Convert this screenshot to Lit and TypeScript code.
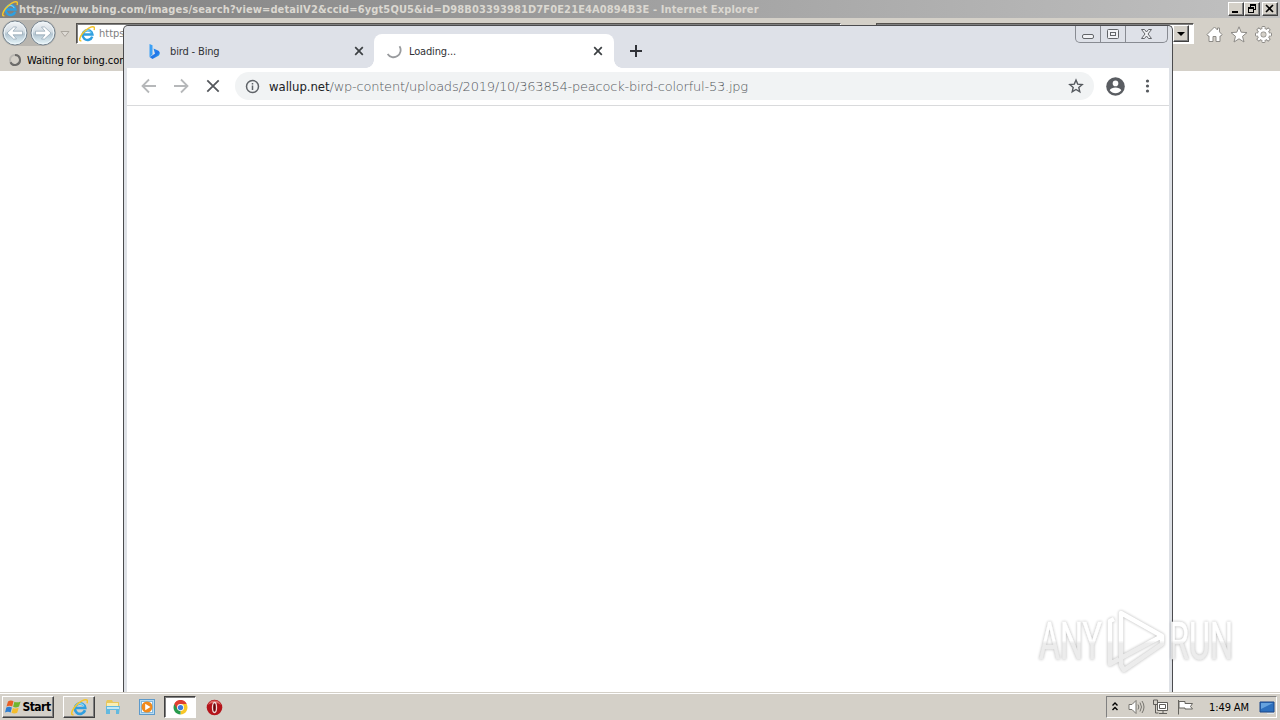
import { LitElement, html, css, svg } from "lit";
import { customElement, property } from "lit/decorators.js";

const ieLogo = (size: number) => html`
  <svg width=${size} height=${size} viewBox="0 0 16 16" fill="none">
    <path d="M13.200 10.600A4.900 4.900 0 1 1 13.400 8.500H4.500" stroke="#2f9fe0" stroke-width="2.500" />
    <path d="M4.300 7.100a4.300 4.300 0 0 1 8 0" stroke="#8ad8f8" stroke-width="1" />
    <path
      d="M2.400 14.600C-.3 15.700.2 11.800 3.500 7.500 7 3 13-.4 15 1.100c.7.6.5 1.800 0 2.900"
      stroke="#f4c52c"
      stroke-width="1.500"
    />
  </svg>
`;

@customElement("round-arrow")
export class RoundArrow extends LitElement {
  @property({ type: Boolean }) forward = false;

  static styles = css`
    :host {
      display: block;
      width: 26px;
      height: 26px;
    }
    svg {
      display: block;
    }
  `;

  render() {
    return html`
      <svg width="26" height="26" viewBox="0 0 26 26">
        <defs>
          <linearGradient id="glass" x2="0" y2="1">
            <stop offset="0" stop-color="#f4f6f8" />
            <stop offset=".45" stop-color="#d3dce3" />
            <stop offset=".55" stop-color="#b3c5d1" />
            <stop offset="1" stop-color="#e9f8fc" />
          </linearGradient>
        </defs>
        <circle cx="13" cy="13" r="12" fill="url(#glass)" stroke="#77848f" />
        <circle cx="13" cy="13" r="10.800" fill="none" stroke="#eef6fa" />
        <path
          transform=${this.forward ? "translate(26 0) scale(-1 1)" : ""}
          d="M5 13l6.500-6h3l-3.500 4.200h9.500v3.600h-9.500l3.500 4.200h-3z"
          fill="#fff"
          stroke="#8fa3b1"
          stroke-width=".7"
        />
      </svg>
    `;
  }
}

@customElement("ie-window")
export class IeWindow extends LitElement {
  static styles = css`
    :host {
      display: flex;
      flex-direction: column;
      height: 692px;
      background: #fff;
      font-family: "DejaVu Sans Condensed", "DejaVu Sans", sans-serif;
    }
    svg {
      display: block;
      flex: none;
    }
    .title {
      display: flex;
      align-items: center;
      height: 18px;
      padding: 0 2px 0 2px;
      background: linear-gradient(90deg, #7f7f7f, #c1c1c1);
      color: #dbd8d1;
      font: bold 11px "DejaVu Sans Condensed", "DejaVu Sans", sans-serif;
      letter-spacing: 0.12px;
      white-space: nowrap;
    }
    .title-text {
      flex: 1;
      padding-left: 1px;
    }
    .buttons {
      display: flex;
    }
    .button {
      box-sizing: border-box;
      width: 16px;
      height: 14px;
      background: #d4d0c8;
      border: 1px solid;
      border-color: #fff #404040 #404040 #fff;
      box-shadow: inset -1px -1px #808080;
    }
    .buttons .button:last-child {
      margin-left: 2px;
    }
    .button.tall {
      height: 17px;
    }
    .nav {
      display: flex;
      height: 30px;
      background: #d4d0c8;
    }
    .arrows {
      display: flex;
      gap: 2px;
      height: 26px;
      margin: 2px 0 0 2px;
      border-radius: 13px;
      background: #b9b6b0;
    }
    .drop {
      margin: 13px 0 0 4px;
    }
    .address {
      display: flex;
      align-items: center;
      box-sizing: border-box;
      width: 765px;
      height: 21px;
      margin: 5px 0 0 6px;
      padding-left: 2px;
      gap: 4px;
      border: 1px solid;
      border-color: #55524e #fff #fff #55524e;
      box-shadow: inset 1px 1px #808080;
      background: #fff;
      color: #808080;
      font-size: 11px;
    }
    .search {
      display: flex;
      justify-content: flex-end;
      box-sizing: border-box;
      width: 318px;
      height: 21px;
      margin: 5px 0 0 35px;
      border: 1px solid;
      border-color: #55524e #fff #fff #55524e;
      box-shadow: inset 1px 1px #808080;
      background: #fff;
      padding: 1px 4px 1px 0;
    }
    .tools {
      display: flex;
      gap: 7px;
      margin: 8px 0 0 12px;
    }
    .tabs {
      display: flex;
      align-items: center;
      gap: 5px;
      height: 22px;
      padding: 1px 0 0 8px;
      background: #d4d0c8;
    }
    .tab-text {
      padding-top: 1px;
      font-size: 11px;
      color: #000;
      letter-spacing: -0.05px;
    }
  `;

  render() {
    return html`
      <div class="title">
        ${ieLogo(16)}
        <span class="title-text"
          >https://www.bing.com/images/search?view=detailV2&amp;ccid=6ygt5QU5&amp;id=D98B03393981D7F0E21E4A0894B3E
          - Internet Explorer</span
        >
        <div class="buttons">
          <div class="button">
            <svg width="14" height="12"><path d="M3 8h6v2H3z" /></svg>
          </div>
          <div class="button">
            <svg width="14" height="12" fill="none" stroke="#000" shape-rendering="crispEdges">
              <path d="M5 1.500h6M5.500 2v2M10.500 2v4.500H9M5 2.500h6M3 4.500h6M3 5.500h6M3.500 5v4.500h5V5" />
            </svg>
          </div>
          <div class="button">
            <svg width="14" height="12"><path d="M3 2l7 7M10 2L3 9" stroke="#000" stroke-width="1.600" /></svg>
          </div>
        </div>
      </div>
      <div class="nav">
        <div class="arrows">
          <round-arrow></round-arrow>
          <round-arrow forward></round-arrow>
        </div>
        <svg class="drop" width="10" height="7">
          <path d="M1 .5h8L5 5.500z" fill="#dedbd5" stroke="#aaa69e" />
        </svg>
        <div class="address">${ieLogo(16)}<span>https://www.bing.com/images/search</span></div>
        <div class="search">
          <div class="button tall">
            <svg width="14" height="15"><path d="M3 6h8L7 10z" /></svg>
          </div>
        </div>
        <div class="tools">
          <svg width="17" height="17" fill="#fff" stroke="#8d8b87">
            <path d="M8.500 1L1 8.500l1 1.500h1v5.500h4v-5h3v5h4V10h1l1-1.500-2.500-2.600V2h-2v2z" />
          </svg>
          <svg width="18" height="17" fill="#fff" stroke="#8d8b87">
            <path d="M9 .8l2.200 5.400 5.800.4-4.500 3.700 1.500 5.700L9 12.800 4 16l1.500-5.700L1 6.600l5.800-.4z" />
          </svg>
          <svg width="17" height="17" viewBox="-8.500 -8.500 17 17" stroke="#8d8b87">
            ${[0, 45, 90, 135, 180, 225, 270, 315].map(
              (angle) =>
                svg`<path transform="rotate(${angle})" d="M-1.700-5l.4-3h2.600l.4 3" fill="#fff" />`,
            )}
            <circle r="4.300" fill="none" stroke-width="3.900" />
            <circle r="4.300" fill="none" stroke="#fff" stroke-width="2.700" />
            ${[0, 45, 90, 135, 180, 225, 270, 315].map(
              (angle) =>
                svg`<path transform="rotate(${angle})" d="M0-4v-3.500" stroke="#fff" stroke-width="2" />`,
            )}
          </svg>
        </div>
      </div>
      <div class="tabs">
        <svg width="14" height="14" fill="none" stroke-width="2">
          <circle cx="7" cy="7" r="5" stroke="#b9b7b2" />
          <path d="M7 2a5 5 0 1 1-4.500 7.200" stroke="#6c6b69" />
        </svg>
        <span class="tab-text">Waiting for bing.com</span>
      </div>
    `;
  }
}

@customElement("chrome-window")
export class ChromeWindow extends LitElement {
  static styles = css`
    :host {
      position: absolute;
      left: 123px;
      top: 25px;
      box-sizing: border-box;
      width: 1050px;
      height: 667px;
      border: 1px solid #4b4b4e;
      border-bottom: 0;
      border-radius: 5px 5px 0 0;
      background: #dee1e6;
      padding: 0 3px;
      overflow: hidden;
      color: #303236;
      font-family: "DejaVu Sans Condensed", "DejaVu Sans", sans-serif;
      white-space: nowrap;
    }
    svg {
      display: block;
      flex: none;
    }
    .strip {
      display: flex;
      align-items: flex-end;
      height: 42px;
      background: #dee1e8;
    }
    .tab {
      display: flex;
      align-items: center;
      box-sizing: border-box;
      height: 34px;
      font-size: 11px;
      letter-spacing: -0.15px;
    }
    .tab.idle {
      width: 247px;
      padding: 0 10px 0 19px;
    }
    .tab.current {
      position: relative;
      width: 240px;
      padding: 0 11px 0 12px;
      border-radius: 8px 8px 0 0;
      background: #fff;
    }
    .tab.current::before,
    .tab.current::after {
      content: "";
      position: absolute;
      bottom: 0;
      left: -8px;
      width: 8px;
      height: 8px;
      background: radial-gradient(circle at 0 0, transparent 7.5px, #fff 8px);
    }
    .tab.current::after {
      left: 100%;
      background: radial-gradient(circle at 100% 0, transparent 7.5px, #fff 8px);
    }
    .label {
      flex: 1;
      padding-left: 7px;
    }
    .plus {
      margin: 0 0 11px 16px;
    }
    .controls {
      align-self: flex-start;
      display: flex;
      box-sizing: border-box;
      width: 93px;
      height: 17px;
      margin: 0 1px 0 auto;
      border: 1px solid #888b92;
      border-top: 0;
      border-radius: 0 0 5px 5px;
    }
    .controls svg + svg {
      border-left: 1px solid #888b92;
    }
    .toolbar {
      display: flex;
      align-items: center;
      box-sizing: border-box;
      height: 38px;
      padding: 0 14px 1px 13px;
      background: #fff;
      border-bottom: 1px solid #d9dadc;
    }
    .toolbar > .nav-icon {
      margin-right: 14px;
    }
    .omnibox {
      display: flex;
      align-items: center;
      box-sizing: border-box;
      flex: 1;
      height: 28px;
      margin: 0 12px 0 -1px;
      padding: 0 10px;
      border-radius: 14px;
      background: #f1f3f4;
      font-size: 13px;
    }
    .url {
      flex: 1;
      padding-left: 9px;
      color: #54585c;
      font-family: "DejaVu Sans Light", "DejaVu Sans Condensed", sans-serif;
      letter-spacing: -0.22px;
    }
    .host {
      color: #202124;
      font-family: "DejaVu Sans Condensed", sans-serif;
      letter-spacing: -0.05px;
    }
    .menu {
      margin-left: 14px;
    }
    .page {
      height: 600px;
      background: #fff;
    }
  `;

  render() {
    const close = html`<svg width="10" height="10" stroke="#3c4043" stroke-width="1.700">
      <path d="M1.200 1.200l7.600 7.600M8.800 1.200L1.200 8.800" />
    </svg>`;
    return html`
      <div class="strip">
        <div class="tab idle">
          <svg width="17" height="17">
            <defs>
              <linearGradient id="bing" x2="1" y2="1">
                <stop offset="0" stop-color="#2b9cf0" />
                <stop offset=".6" stop-color="#2273e8" />
                <stop offset="1" stop-color="#35c9ef" />
              </linearGradient>
            </defs>
            <path d="M3.500 1l3 1.200v9.300L3.500 14z" fill="#3ba0f5" />
            <path d="M7.500 5.500l4.500 2c2.400 1.300 2.200 3.800.5 5.200L6.500 16l-3-2 5.500-3.200z" fill="url(#bing)" />
          </svg>
          <span class="label">bird - Bing</span>
          ${close}
        </div>
        <div class="tab current">
          <svg width="16" height="16" fill="none">
            <path d="M13.500 3.300A7 7 0 1 1 1.600 11" stroke="#999b9e" stroke-width="1.800" />
          </svg>
          <span class="label">Loading...</span>
          ${close}
        </div>
        <svg class="plus" width="12" height="12" stroke="#303238" stroke-width="2">
          <path d="M6 0v12M0 6h12" />
        </svg>
        <div class="controls">
          <svg width="24" height="16" fill="#f1f2f5" stroke="#626569">
            <rect x="6.500" y="8.500" width="11" height="4" rx="1.500" />
          </svg>
          <svg width="24" height="16" fill="#f1f2f5" stroke="#626569">
            <rect x="6.500" y="3.500" width="11" height="9" rx="1" />
            <rect x="9.500" y="6.500" width="5" height="3" />
          </svg>
          <svg width="41" height="16" fill="#f1f2f5" stroke="#626569">
            <path d="M15.500 3.500h3l2 2.500 2-2.500h3l-3.500 4.500 3.500 4.500h-3l-2-2.500-2 2.500h-3l3.500-4.500z" />
          </svg>
        </div>
      </div>
      <div class="toolbar">
        <svg class="nav-icon" width="18" height="16" fill="none" stroke="#b6b8ba" stroke-width="1.800">
          <path d="M16 8H3M9 1.500L2.500 8 9 14.500" />
        </svg>
        <svg class="nav-icon" width="18" height="16" fill="none" stroke="#b6b8ba" stroke-width="1.800">
          <path d="M2 8h13M9 1.500L15.500 8 9 14.500" />
        </svg>
        <svg class="nav-icon" width="18" height="16" stroke="#55585d" stroke-width="1.800">
          <path d="M3.300 2.300l11.400 11.400M14.700 2.300L3.300 13.700" />
        </svg>
        <div class="omnibox">
          <svg width="15" height="15" fill="none" stroke="#5f6368" stroke-width="1.500">
            <circle cx="7.500" cy="7.500" r="6" />
            <path d="M7.500 6.500V11M7.500 4v1.500" />
          </svg>
          <span class="url"
            ><span class="host">wallup.net</span>/wp-content/uploads/2019/10/363854-peacock-bird-colorful-53.jpg</span
          >
          <svg width="16" height="16" fill="none" stroke="#55595e" stroke-width="1.400">
            <path d="M8 2l1.700 4.100 4.500.4-3.400 2.900 1 4.400L8 11.500l-3.800 2.300 1-4.400-3.400-2.900 4.500-.4z" />
          </svg>
        </div>
        <svg width="19" height="19">
          <circle cx="9.500" cy="9.500" r="9.300" fill="#5a5d62" />
          <circle cx="9.500" cy="6.400" r="2.800" fill="#fff" />
          <path d="M3.700 13.200c1.800-3.600 9.800-3.600 11.600 0-2.800 3.900-8.800 3.900-11.600 0z" fill="#fff" />
        </svg>
        <svg class="menu" width="16" height="16" fill="#55595e">
          <circle cx="8.500" cy="3" r="1.600" />
          <circle cx="8.500" cy="8" r="1.600" />
          <circle cx="8.500" cy="13" r="1.600" />
        </svg>
      </div>
      <div class="page"></div>
    `;
  }
}

@customElement("task-bar")
export class TaskBar extends LitElement {
  static styles = css`
    :host {
      display: flex;
      align-items: center;
      box-sizing: border-box;
      height: 28px;
      padding: 1px 3px 0 2px;
      border-top: 1px solid #d4d0c8;
      box-shadow: inset 0 1px #fff;
      background: #d4d0c8;
      font: 11px "DejaVu Sans Condensed", "DejaVu Sans", sans-serif;
      color: #000;
    }
    svg {
      display: block;
      flex: none;
    }
    .raised {
      display: flex;
      align-items: center;
      justify-content: center;
      box-sizing: border-box;
      height: 22px;
      border: 1px solid;
      border-color: #fff #404040 #404040 #fff;
      box-shadow: inset -1px -1px #808080;
    }
    .start {
      width: 52px;
      font-size: 12px;
      font-weight: bold;
      letter-spacing: -0.5px;
      gap: 0;
      margin-right: 9px;
    }
    .app {
      width: 32px;
      margin-right: 1px;
    }
    .pressed {
      display: flex;
      align-items: center;
      justify-content: center;
      box-sizing: border-box;
      width: 32px;
      height: 22px;
      border: 1px solid;
      border-color: #404040 #fff #fff #404040;
      box-shadow: inset 1px 1px #808080;
      background: #fff;
    }
    .quick {
      width: 34px;
      display: flex;
      justify-content: center;
    }
    .pressed + .quick {
      width: 36px;
    }
    .tray {
      display: flex;
      align-items: center;
      box-sizing: border-box;
      width: 171px;
      height: 22px;
      margin-left: auto;
      padding-left: 5px;
      border: 1px solid;
      border-color: #808080 #fff #fff #808080;
    }
    .tray svg {
      margin-right: 8px;
    }
    .clock {
      width: 44px;
      margin: 0 6px 0 7px;
      white-space: nowrap;
      letter-spacing: -0.1px;
    }
    .tray .desktop {
      margin: 0;
    }
  `;

  render() {
    return html`
      <div class="raised start">
        <svg width="17" height="16">
          <path d="M3 2.500C5 1 7 1.300 8.500 2.300L7.200 7.500C5.500 6.500 3.800 6.400 1.500 7.500z" fill="#e85f25" />
          <path d="M9.400 2.700c2 1 4 .8 6.200-.3L14 7.500c-2 1.100-4 1.200-5.900.3z" fill="#6fb52e" />
          <path d="M1.300 8.400c2-1 3.800-.9 5.600.1l-1.300 5C4 12.500 2 12.500 0 13.500z" fill="#2e7ed2" />
          <path d="M7.900 8.900c2 .9 3.900.7 5.800-.2l-1.500 5c-2 1.100-3.900 1-5.700 0z" fill="#f4bd2d" />
        </svg>
        <span>Start</span>
      </div>
      <div class="raised app">${ieLogo(17)}</div>
      <div class="quick">
        <svg width="18" height="18">
          <path d="M2 4l1-2h5l1 2h6v8H2z" fill="#e8c75c" />
          <path d="M3 5h11v4H3z" fill="#f9eeb4" />
          <path d="M2 8h14l-1 8h-3v-4H6v4H2z" fill="#63b9df" />
          <path d="M3 9h12v2H3z" fill="#c3e8f4" />
        </svg>
      </div>
      <div class="quick">
        <svg width="17" height="17">
          <rect x=".5" y=".5" width="15" height="15" fill="#b9dcf2" stroke="#5d9acb" />
          <rect x="2.500" y="2.500" width="11" height="11" fill="#fff" stroke="#82b8dd" />
          <circle cx="8" cy="8" r="5.500" fill="#f18a1c" />
          <path d="M6.200 4.800v6.400L11.500 8z" fill="#fff" />
        </svg>
      </div>
      <div class="pressed">
        <svg width="15" height="15" viewBox="-8 -8 16 16">
          <path d="M0 0L-6.500-3.700A7.500 7.500 0 0 1 6.500-3.700z" fill="#df3f31" />
          <path d="M0 0L6.500-3.700A7.500 7.500 0 0 1 0 7.500z" fill="#f9c727" />
          <path d="M0 0L0 7.500A7.500 7.500 0 0 1-6.500-3.700z" fill="#279b4c" />
          <path d="M0-3.700h6.500L3.200 2z" fill="#f9c727" />
          <path d="M0-3.700h6.500a7 7 0 0 0-13 0L-3.200 2z" fill="#df3f31" />
          <circle r="3.700" fill="#fff" />
          <circle r="2.800" fill="#3c7ddd" />
        </svg>
      </div>
      <div class="quick">
        <svg width="17" height="17">
          <circle cx="8.500" cy="8.500" r="7.800" fill="#b4141b" />
          <path d="M2 6a7 7 0 0 1 13 0C11 3 6 3 2 6z" fill="#dc6864" />
          <ellipse cx="8.500" cy="8.500" rx="2" ry="5" fill="#6b070a" stroke="#f3dcdc" stroke-width="1.300" />
        </svg>
      </div>
      <div class="tray">
        <svg width="8" height="12" fill="none" stroke="#000" stroke-width="1.400">
          <path d="M.5 4.500L3 2l2.500 2.500M.5 9L3 6.500 5.500 9" />
        </svg>
        <svg width="17" height="16" fill="none" stroke="#77756f">
          <path d="M1 5.500h3l4-4v13l-4-4H1z" fill="#fff" />
          <path d="M10 5.500q1.700 2.500 0 5M12 3.500q3 4.500 0 9M14 2q4 6 0 12" />
        </svg>
        <svg width="17" height="16" fill="none" stroke="#5f5d59">
          <path d="M4.500 3.500h10v8h-10zM6.500 5.500h6v4h-6z" fill="#fff" />
          <path d="M6 14.500h8M10 12v2M.5 1v4.500h4V1zM2.500 6v8h3" />
        </svg>
        <svg width="16" height="16" fill="#fff" stroke="#66645f">
          <path d="M.5 1v14.500M1 2.500h6v2h7.500l-2 3 2 2.500H7V9H1z" />
        </svg>
        <span class="clock">1:49 AM</span>
        <svg class="desktop" width="17" height="15">
          <path d="M1 2h14v10H1z" fill="#2d70be" stroke="#1b468a" />
          <path d="M2 3h12L2 9z" fill="#65a2de" />
          <path d="M8 13h7v1H8z" fill="#dce6ef" />
        </svg>
      </div>
    `;
  }
}

@customElement("app-root")
export class AppRoot extends LitElement {
  static styles = css`
    :host {
      display: block;
      position: relative;
      width: 1280px;
      height: 720px;
      overflow: hidden;
    }
    .watermark {
      position: absolute;
      left: 1030px;
      top: 604px;
      overflow: visible;
      opacity: 0.9;
      filter: drop-shadow(0 0 1.5px rgba(0, 0, 0, 0.32));
      font: 51px Roboto, sans-serif;
    }
  `;

  render() {
    return html`
      <ie-window></ie-window>
      <chrome-window></chrome-window>
      <svg class="watermark" width="240" height="76">
        <defs>
          <linearGradient id="fade" gradientUnits="userSpaceOnUse" x1="0" y1="18" x2="0" y2="55">
            <stop offset=".5" stop-color="#fff" />
            <stop offset=".58" stop-color="#eaeaea" />
          </linearGradient>
        </defs>
        <g fill="url(#fade)" stroke="url(#fade)" stroke-width=".6">
          <text x="9" y="55" textLength="63" lengthAdjust="spacingAndGlyphs">ANY</text>
          <text x="139" y="55" textLength="64" lengthAdjust="spacingAndGlyphs">RUN</text>
        </g>
        <g fill="none" stroke="url(#fade)" stroke-width="4.500" stroke-linejoin="round">
          <path d="M91 9v45l41-22zM84 15l-4 2v43l9-5M91 54v7l3 5 38-26v-8" />
        </g>
      </svg>
      <task-bar></task-bar>
    `;
  }
}
